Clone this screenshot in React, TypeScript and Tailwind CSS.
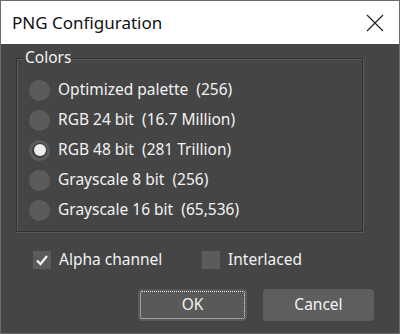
import { useState } from "react";

const options = [
    "Optimized palette  (256)",
    "RGB 24 bit  (16.7 Million)",
    "RGB 48 bit  (281 Trillion)",
    "Grayscale 8 bit  (256)",
    "Grayscale 16 bit  (65,536)",
];

export default function App() {
    const [selected, setSelected] = useState(2);
    const [alpha, setAlpha] = useState(true);
    const [interlaced, setInterlaced] = useState(false);

    return (
        <div className="w-[400px] h-[334px] bg-[#454545] border border-[#6a6a6a] flex flex-col text-[#f2f2f2] font-['Noto_Sans',sans-serif] overflow-hidden">
            {/* title bar */}
            <div className="h-[43px] bg-white flex items-center justify-between pl-[11px] pr-[15px] shrink-0">
                <span className="text-[17px] text-[#111]">PNG Configuration</span>
                <svg width="18" height="18" viewBox="0 0 18 18" className="text-[#222]">
                    <path d="M1 1 L17 17 M17 1 L1 17" stroke="currentColor" strokeWidth="1.2" fill="none" />
                </svg>
            </div>

            <div className="flex flex-col pt-[14px] pl-[15px] pr-[36px]">
                {/* group box */}
                <div className="relative h-[174px] border border-[#333] shadow-[inset_1px_1px_0_#5a5a5a,1px_1px_0_#5a5a5a] pl-[12px] pt-[16px]">
                    <span className="absolute left-[7px] -top-[13px] bg-[#454545] px-[1px] text-[15.5px] leading-[22px]">Colors</span>
                    {options.map((label, i) => (
                        <label key={i} className="flex items-center gap-[8px] h-[30px] cursor-default" onClick={() => setSelected(i)}>
                            <span className="w-[21px] h-[21px] rounded-full bg-[#5b5b5b] flex items-center justify-center">
                                {selected === i && (
                                    <span className="w-[15px] h-[15px] rounded-full bg-[#3e3e3e] flex items-center justify-center">
                                        <span className="w-[12px] h-[12px] rounded-full bg-[#ececec]" />
                                    </span>
                                )}
                            </span>
                            <span className="text-[15.5px] whitespace-pre">{label}</span>
                        </label>
                    ))}
                </div>

                {/* checkboxes */}
                <div className="flex items-center h-[24px] mt-[16px] pl-[17px]">
                    <label className="flex items-center gap-[8px] w-[169px]" onClick={() => setAlpha(!alpha)}>
                        <span className="w-[18px] h-[18px] bg-[#5b5b5b] flex items-center justify-center">
                            {alpha && (
                                <svg width="14" height="14" viewBox="0 0 14 14">
                                    <path d="M2 7.5 L5.5 11 L12 3" stroke="#f2f2f2" strokeWidth="2.2" fill="none" />
                                </svg>
                            )}
                        </span>
                        <span className="text-[15.5px]">Alpha channel</span>
                    </label>
                    <label className="flex items-center gap-[8px]" onClick={() => setInterlaced(!interlaced)}>
                        <span className="w-[18px] h-[18px] bg-[#5b5b5b] flex items-center justify-center">
                            {interlaced && (
                                <svg width="14" height="14" viewBox="0 0 14 14">
                                    <path d="M2 7.5 L5.5 11 L12 3" stroke="#f2f2f2" strokeWidth="2.2" fill="none" />
                                </svg>
                            )}
                        </span>
                        <span className="text-[15.5px]">Interlaced</span>
                    </label>
                </div>

                {/* buttons */}
                <div className="flex justify-end gap-[16px] mt-[17px] -mr-[11px]">
                    <button className="w-[109px] h-[32px] rounded-[4px] bg-[#595959] text-[15.5px] text-[#f2f2f2] p-[2px]">
                        <span className="flex items-center justify-center w-full h-full border border-dotted border-[#e8e8e8] rounded-[2px]">OK</span>
                    </button>
                    <button className="w-[111px] h-[32px] rounded-[4px] bg-[#5e5e5e] text-[15.5px] text-[#f2f2f2]">Cancel</button>
                </div>
            </div>
        </div>
    );
}
